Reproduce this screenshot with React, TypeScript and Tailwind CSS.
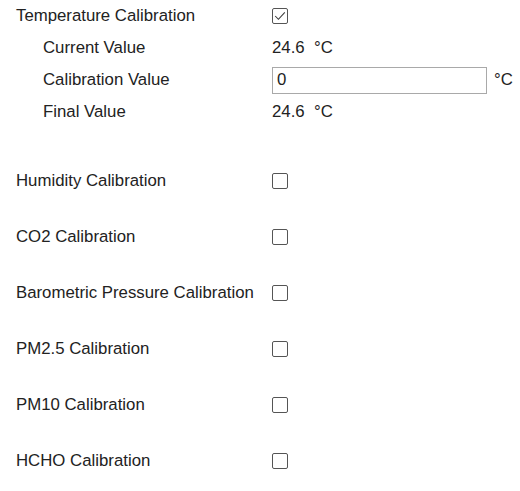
import React from 'react';

const Box = ({ checked = false }: { checked?: boolean }) => (
  <span className="inline-flex h-[16px] w-[16px] items-center justify-center rounded-[2px] border border-[#555] bg-white">
    {checked && (
      <svg viewBox="0 0 16 16" className="h-[14px] w-[14px]" fill="none" stroke="#3a3a3a" strokeWidth="1.2">
        <path d="M2.5 8 L6.2 11.8 L13.5 3.8" />
      </svg>
    )}
  </span>
);

const items = [
  'Humidity Calibration',
  'CO2 Calibration',
  'Barometric Pressure Calibration',
  'PM2.5 Calibration',
  'PM10 Calibration',
  'HCHO Calibration',
];

export default function App() {
  return (
    <div className="min-h-[491px] w-[520px] bg-white pl-4 text-[16.8px] text-[#222] font-['Liberation_Sans',Arial,sans-serif]">
      {/* Temperature */}
      <div className="flex h-8 items-center">
        <span className="w-[256px]">Temperature Calibration</span>
        <Box checked />
      </div>
      <div className="flex h-8 items-center">
        <span className="w-[256px] pl-[27px]">Current Value</span>
        <span>24.6&nbsp; °C</span>
      </div>
      <div className="flex h-8 items-center">
        <span className="w-[256px] pl-[27px]">Calibration Value</span>
        <input
          readOnly
          value="0"
          className="h-[27px] w-[215px] border border-[#a9a9a9] px-[4px] text-[16.8px] text-[#222] outline-none"
        />
        <span className="ml-[7px]">°C</span>
      </div>
      <div className="flex h-8 items-center">
        <span className="w-[256px] pl-[27px]">Final Value</span>
        <span>24.6&nbsp; °C</span>
      </div>

      <div className="mt-[25px] flex flex-col">
        {items.map((label) => (
          <div key={label} className="flex h-14 items-center">
            <span className="w-[256px] whitespace-nowrap">{label}</span>
            <Box />
          </div>
        ))}
      </div>
    </div>
  );
}
